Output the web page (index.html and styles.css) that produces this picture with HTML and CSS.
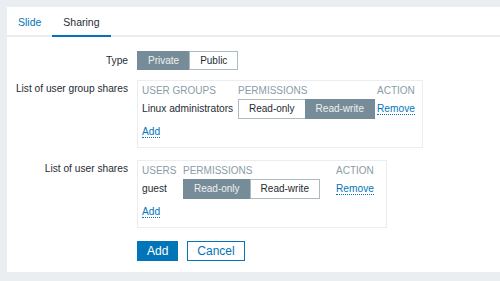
FILE: index.html
```html
<!DOCTYPE html>
<html lang="en">
<head>
    <meta charset="UTF-8">
    <meta name="viewport" content="width=device-width, initial-scale=1.0">
    <title>Slide show sharing</title>
    <link rel="stylesheet" href="styles.css">
</head>
<body>
    <div class="panel">
        <div class="tabs">
            <a class="tab" href="#">Slide</a>
            <a class="tab tab-active" href="#">Sharing</a>
        </div>

        <div class="form">
            <div class="form-row row-type">
                <div class="form-label">Type</div>
                <div class="seg">
                    <span class="seg-btn seg-active">Private</span>
                    <span class="seg-btn">Public</span>
                </div>
            </div>

            <div class="form-row row-groups">
                <div class="form-label label-top">List of user group shares</div>
                <div class="share-box share-groups">
                    <div class="share-head">User groups</div>
                    <div class="share-head">Permissions</div>
                    <div class="share-head">Action</div>

                    <div class="share-cell">Linux administrators</div>
                    <div class="seg">
                        <span class="seg-btn">Read-only</span>
                        <span class="seg-btn seg-active">Read-write</span>
                    </div>
                    <div class="share-cell"><a class="link-action" href="#">Remove</a></div>

                    <div class="share-add"><a class="link-action" href="#">Add</a></div>
                </div>
            </div>

            <div class="form-row row-users">
                <div class="form-label label-top">List of user shares</div>
                <div class="share-box share-users">
                    <div class="share-head">Users</div>
                    <div class="share-head">Permissions</div>
                    <div class="share-head">Action</div>

                    <div class="share-cell">guest</div>
                    <div class="seg">
                        <span class="seg-btn seg-active">Read-only</span>
                        <span class="seg-btn">Read-write</span>
                    </div>
                    <div class="share-cell"><a class="link-action" href="#">Remove</a></div>

                    <div class="share-add"><a class="link-action" href="#">Add</a></div>
                </div>
            </div>

            <div class="form-row row-buttons">
                <div></div>
                <div class="buttons">
                    <button class="btn">Add</button>
                    <button class="btn btn-alt">Cancel</button>
                </div>
            </div>
        </div>
    </div>
</body>
</html>
```

FILE: styles.css
```css
body {
    margin: 0;
    background-color: #ebeef0;
    font-family: 'Liberation Sans', Arial, sans-serif;
    font-size: 10.2px;
    line-height: 14px;
    color: #1f2c33;
}

a {
    color: #0275b8;
    text-decoration: none;
}

.panel {
    margin: 7px 0 9px 7px;
    background-color: white;
}

/* tabs */
.tabs {
    display: flex;
    border-bottom: 2px solid #ebeef0;
}

.tab {
    padding: 3px 11px 0;
    line-height: 25px;
    font-size: 10.5px;
}

.tab-active {
    color: #1f2c33;
    border-bottom: 2px solid #0275b8;
    margin-bottom: -2px;
}

/* form */
.form {
    padding: 14px 0 11px;
}

.form-row {
    display: grid;
    grid-template-columns: 121px 1fr;
    column-gap: 9px;
    align-items: center;
}

.row-groups { margin-top: 10px; align-items: start; }
.row-users { margin-top: 12px; align-items: start; }
.row-buttons { margin-top: 13px; }

.form-label {
    text-align: right;
}

.label-top {
    padding-top: 2px;
}

/* segmented buttons */
.seg {
    display: flex;
    justify-self: start;
}

.seg-btn {
    padding: 0 10px;
    font-size: 10px;
    line-height: 18px;
    border: 1px solid #acbbc2;
    background-color: white;
    white-space: nowrap;
}

.seg-btn + .seg-btn {
    margin-left: -1px;
}

.seg-active {
    background-color: #768d99;
    border-color: #768d99;
    color: #f0f0f0;
}

.row-type .seg-btn {
    line-height: 17px;
}

/* share tables */
.share-box {
    justify-self: start;
    display: grid;
    align-items: center;
    border: 1px solid #ebeef0;
    padding: 4px 7px 8px 4px;
}

.share-groups { grid-template-columns: 96px 139px max-content; }
.share-users { grid-template-columns: 41px 153px max-content; padding-right: 12px; }

.share-head {
    text-transform: uppercase;
    font-size: 10px;
    line-height: 12px;
    color: #8a9ca6;
    margin-bottom: 2px;
}

.share-cell {
    white-space: nowrap;
}

.share-add {
    grid-column: 1 / -1;
    margin-top: 6px;
}

.link-action {
    border-bottom: 1px dotted #0275b8;
}

/* buttons */
.buttons {
    display: flex;
    gap: 9px;
}

.btn {
    font-family: 'Liberation Sans', Arial, sans-serif;
    font-size: 12px;
    line-height: 18px;
    padding: 0 9px;
    border: 1px solid #0275b8;
    background-color: #0275b8;
    color: white;
    cursor: pointer;
}

.btn-alt {
    background-color: white;
    color: #0275b8;
}
```
